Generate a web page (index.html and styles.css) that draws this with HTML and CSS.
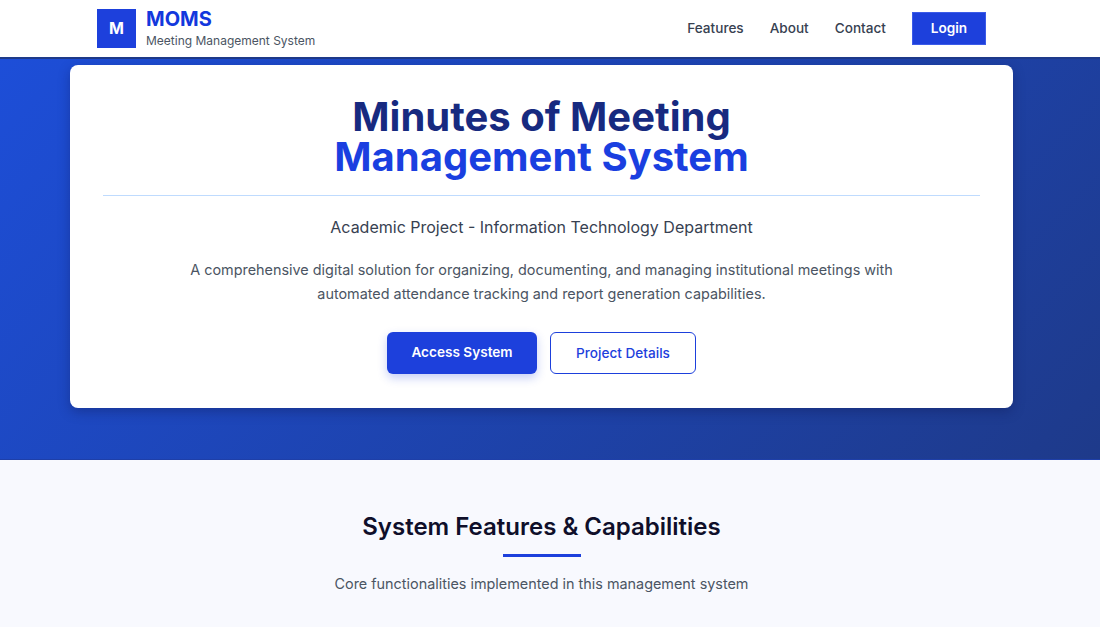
FILE: index.html
```html
<!DOCTYPE html>
<html lang="en">
<head>
<meta charset="utf-8">
<title>MOMS - Meeting Management System</title>
<link rel="stylesheet" href="styles.css">
</head>
<body>
<header class="site-header">
  <div class="brand">
    <div class="brand-mark">M</div>
    <div class="brand-text">
      <div class="brand-name">MOMS</div>
      <div class="brand-sub">Meeting Management System</div>
    </div>
  </div>
  <nav class="nav">
    <a class="nav-link" href="#features">Features</a>
    <a class="nav-link" href="#about">About</a>
    <a class="nav-link" href="#contact">Contact</a>
    <a class="login" href="#login">Login</a>
  </nav>
</header>
<section class="hero">
  <div class="card">
    <h1 class="title"><span class="title-dark">Minutes of Meeting</span><span class="title-blue">Management System</span></h1>
    <p class="subtitle">Academic Project - Information Technology Department</p>
    <p class="desc">A comprehensive digital solution for organizing, documenting, and managing institutional meetings with automated attendance tracking and report generation capabilities.</p>
    <div class="actions">
      <a class="btn btn-primary" href="#access">Access System</a>
      <a class="btn btn-outline" href="#details">Project Details</a>
    </div>
  </div>
</section>
<section class="features" id="features">
  <h2 class="features-title">System Features &amp; Capabilities</h2>
  <div class="features-rule"></div>
  <p class="features-sub">Core functionalities implemented in this management system</p>
</section>
</body>
</html>
```
FILE: styles.css
```css
* { box-sizing: border-box; }
html, body { margin: 0; padding: 0; height: 627px; overflow: hidden; }
body { font-family: Inter, "Liberation Sans", sans-serif; background: #f8f9fe; color: #0f172a; }
a { text-decoration: none; }

.site-header {
  height: 59px;
  background: #fff;
  border-bottom: 2px solid #1e3a8a;
  display: flex;
  align-items: center;
  justify-content: space-between;
  padding: 0 114px 1px 97px;
}
.brand { display: flex; align-items: center; gap: 10px; }
.brand-mark {
  width: 39px; height: 39px;
  background: #1d40dc;
  color: #fff;
  font-weight: 700;
  font-size: 16px;
  display: flex; align-items: center; justify-content: center;
}
.brand-name { font-size: 20px; font-weight: 700; line-height: 24px; color: #1338dd; }
.brand-sub { font-size: 12px; line-height: 16px; color: #4b5563; margin-top: 2px; }
.nav { display: flex; align-items: center; }
.nav-link { font-size: 13.6px; color: #374151; margin-right: 26px; font-weight: 500; }
.login {
  width: 74px; height: 33px;
  background: #1d40dc;
  color: #fff;
  font-size: 13.6px;
  font-weight: 600;
  display: flex; align-items: center; justify-content: center;
  border: 1px solid #3b5be8;
}

.hero {
  height: 401px;
  background: linear-gradient(135deg, #1d4ed8, #1e3a8a);
  border-bottom: 1px solid #1e3fa8;
  padding: 6px 87px 0 70px;
}
.card {
  height: 343px;
  background: #fff;
  border-radius: 8px;
  box-shadow: 0 4px 12px rgba(15, 23, 80, .35);
  padding: 32px 33px 0;
  text-align: center;
}
.title { margin: 0; font-size: 40px; line-height: 40px; font-weight: 700; }
.title-dark { display: block; color: #172a80; }
.title-blue { display: block; color: #1a3fe0; }
.subtitle {
  margin: 18px 0 0;
  padding-top: 20px;
  border-top: 1px solid #bfdbfe;
  font-size: 16px;
  line-height: 22px;
  color: #374151;
}
.desc {
  margin: 20px auto 0;
  width: 740px;
  font-size: 14.4px;
  line-height: 24px;
  color: #4b5563;
}
.actions { display: flex; justify-content: center; gap: 13px; margin-top: 26px; }
.btn {
  height: 42px;
  border-radius: 6px;
  font-size: 13.6px;
  font-weight: 600;
  display: flex; align-items: center; justify-content: center;
}
.btn-primary { width: 150px; background: #1d40dc; color: #fff; box-shadow: 0 4px 10px rgba(29, 64, 220, .25); padding-bottom: 2px; }
.btn-outline { width: 146px; background: #fff; color: #1d40dc; border: 1px solid #1d40dc; font-weight: 500; }

.features { padding: 52px 17px 0 0; text-align: center; }
.features-title { margin: 0; font-size: 24px; line-height: 30px; font-weight: 600; color: #0f0f2a; }
.features-rule { width: 78px; height: 3px; background: #1d40dc; margin: 12px auto 0; }
.features-sub { margin: 17px 0 0; font-size: 14.4px; line-height: 20px; color: #4b5563; }
```
